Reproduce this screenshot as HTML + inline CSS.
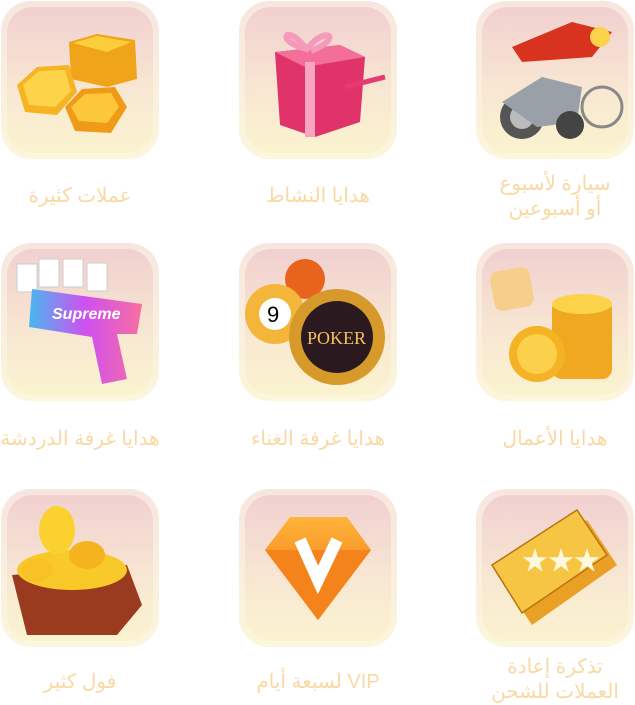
<!DOCTYPE html>
<html><head><meta charset="utf-8"><style>
body{margin:0;width:635px;height:704px;background:#fff;position:relative;overflow:hidden;font-family:"Liberation Sans","Noto Sans CJK SC",sans-serif}
.c{position:absolute;width:158px;height:158px;border-radius:30px;background:linear-gradient(#f7e6df,#fcf6dc);box-sizing:border-box;padding:6px}
.c>.in{width:100%;height:100%;border-radius:26px;background:linear-gradient(#f1d0d0,#f8e8d2 60%,#fbf3cf);position:relative;overflow:hidden}
.c svg{position:absolute;left:0;top:0;width:146px;height:146px}
.l{position:absolute;width:200px;text-align:center;color:#f9d9a3;font-size:20px;line-height:25px;direction:rtl}
</style></head><body>

<div class="c" style="left:1px;top:1px"><div class="in"><svg viewBox="0 0 146 146">
<polygon points="62,35 90,27 128,33 130,72 100,80 64,72" fill="#f0a41a"/><polygon points="66,36 90,29 124,35 100,45" fill="#fbcf3c"/>
<polygon points="10,78 30,60 62,58 70,85 50,108 18,105" fill="#f6b324"/><polygon points="16,78 32,64 58,63 64,84 48,100 22,98" fill="#fdd34a"/>
<polygon points="58,100 75,82 108,80 120,100 104,126 68,124" fill="#ef9b17"/><polygon points="64,100 78,87 104,86 112,100 100,116 72,114" fill="#fcc83a"/>
</svg></div></div>
<div class="c" style="left:239px;top:1px"><div class="in"><svg viewBox="0 0 146 146">
<polygon points="30,45 95,38 120,50 115,115 70,130 35,118" fill="#e0336a"/><polygon points="30,45 95,38 120,50 60,60" fill="#f36e98"/>
<rect x="60" y="55" width="10" height="75" fill="#f7a5c3"/><path d="M60 40 C40 15 30 35 62 42 C80 18 100 30 66 44" stroke="#f59abb" stroke-width="6" fill="none"/>
<path d="M100 80 L140 70" stroke="#e83a72" stroke-width="5"/></svg></div></div>
<div class="c" style="left:476px;top:1px"><div class="in"><svg viewBox="0 0 146 146">
<path d="M30 40 L90 15 L130 25 L110 50 L40 55Z" fill="#d8331e"/><circle cx="118" cy="30" r="10" fill="#fbd24b"/>
<circle cx="40" cy="110" r="22" fill="#555"/><circle cx="40" cy="110" r="12" fill="#bbb"/><circle cx="120" cy="100" r="20" fill="none" stroke="#888" stroke-width="3"/>
<path d="M20 95 L60 70 L100 80 L95 115 L55 120Z" fill="#9aa0a8"/><circle cx="88" cy="118" r="14" fill="#444"/></svg></div></div>

<div class="c" style="left:1px;top:243px"><div class="in"><svg viewBox="0 0 146 146">
<rect x="10" y="15" width="20" height="28" fill="#fff" stroke="#ccc"/><rect x="32" y="10" width="20" height="28" fill="#fff" stroke="#ccc"/><rect x="56" y="10" width="20" height="28" fill="#fff" stroke="#ccc"/><rect x="80" y="14" width="20" height="28" fill="#fff" stroke="#ccc"/>
<defs><linearGradient id="g1" x1="0" x2="1"><stop offset="0" stop-color="#48b8f0"/><stop offset=".5" stop-color="#d04ff0"/><stop offset="1" stop-color="#f86fa0"/></linearGradient></defs>
<path d="M25 40 L135 55 L130 85 L110 85 L120 130 L95 135 L85 88 L22 78Z" fill="url(#g1)"/>
<text x="45" y="70" font-size="16" font-weight="bold" fill="#fff" font-family="Liberation Sans" font-style="italic">Supreme</text></svg></div></div>
<div class="c" style="left:239px;top:243px"><div class="in"><svg viewBox="0 0 146 146">
<circle cx="60" cy="30" r="20" fill="#e8641c"/><circle cx="30" cy="65" r="30" fill="#f4b63a"/><circle cx="30" cy="65" r="16" fill="#fff"/><text x="22" y="73" font-size="22" font-family="Liberation Sans">9</text>
<circle cx="92" cy="88" r="48" fill="#d59a2a"/><circle cx="92" cy="88" r="36" fill="#2a1a20"/><text x="62" y="95" font-size="18" font-family="Liberation Serif" fill="#f3c05a">POKER</text></svg></div></div>
<div class="c" style="left:476px;top:243px"><div class="in"><svg viewBox="0 0 146 146">
<rect x="10" y="20" width="40" height="40" rx="8" fill="#f6d08a" transform="rotate(-10 30 40)"/>
<rect x="70" y="50" width="60" height="80" rx="10" fill="#f0a820"/><ellipse cx="100" cy="55" rx="30" ry="10" fill="#fcd24a"/>
<circle cx="55" cy="105" r="28" fill="#f4b325"/><circle cx="55" cy="105" r="20" fill="#fbd04a"/></svg></div></div>

<div class="c" style="left:1px;top:489px"><div class="in"><svg viewBox="0 0 146 146">
<path d="M5 80 L120 70 L135 110 L110 140 L20 140Z" fill="#9a3a1e"/><ellipse cx="65" cy="75" rx="55" ry="20" fill="#f9c92a"/>
<ellipse cx="50" cy="35" rx="18" ry="24" fill="#fbd12f"/><ellipse cx="80" cy="60" rx="18" ry="14" fill="#f4b31f"/><ellipse cx="30" cy="75" rx="16" ry="12" fill="#f8c226"/></svg></div></div>
<div class="c" style="left:239px;top:489px"><div class="in"><svg viewBox="0 0 146 146">
<defs><linearGradient id="g2" x1="0" y1="0" x2="0" y2="1"><stop offset="0" stop-color="#ffb43a"/><stop offset="1" stop-color="#f06a10"/></linearGradient></defs>
<polygon points="20,55 45,22 102,22 126,55 73,125" fill="url(#g2)"/><polygon points="20,55 126,55 73,125" fill="#f5831b"/>
<path d="M55 45 L73 85 L92 45" stroke="#fff" stroke-width="12" fill="none"/></svg></div></div>
<div class="c" style="left:476px;top:489px"><div class="in"><svg viewBox="0 0 146 146">
<polygon points="20,85 105,25 135,70 50,130" fill="#e9a024"/><polygon points="10,70 95,15 125,60 40,118" fill="#f7c544" stroke="#b87410" stroke-width="1.5"/>
<text x="40" y="75" font-size="26" fill="#fff8e0">★★★</text></svg></div></div>

<div class="l" style="left:-20px;top:184px">عملات كثيرة</div>
<div class="l" style="left:218px;top:184px">هدايا النشاط</div>
<div class="l" style="left:455px;top:172px">سيارة لأسبوع<br>أو أسبوعين</div>
<div class="l" style="left:-20px;top:427px">هدايا غرفة الدردشة</div>
<div class="l" style="left:218px;top:427px">هدايا غرفة الغناء</div>
<div class="l" style="left:455px;top:427px">هدايا الأعمال</div>
<div class="l" style="left:-20px;top:670px">فول كثير</div>
<div class="l" style="left:218px;top:670px">VIP لسبعة أيام</div>
<div class="l" style="left:455px;top:655px">تذكرة إعادة<br>العملات للشحن</div>
</body></html>
